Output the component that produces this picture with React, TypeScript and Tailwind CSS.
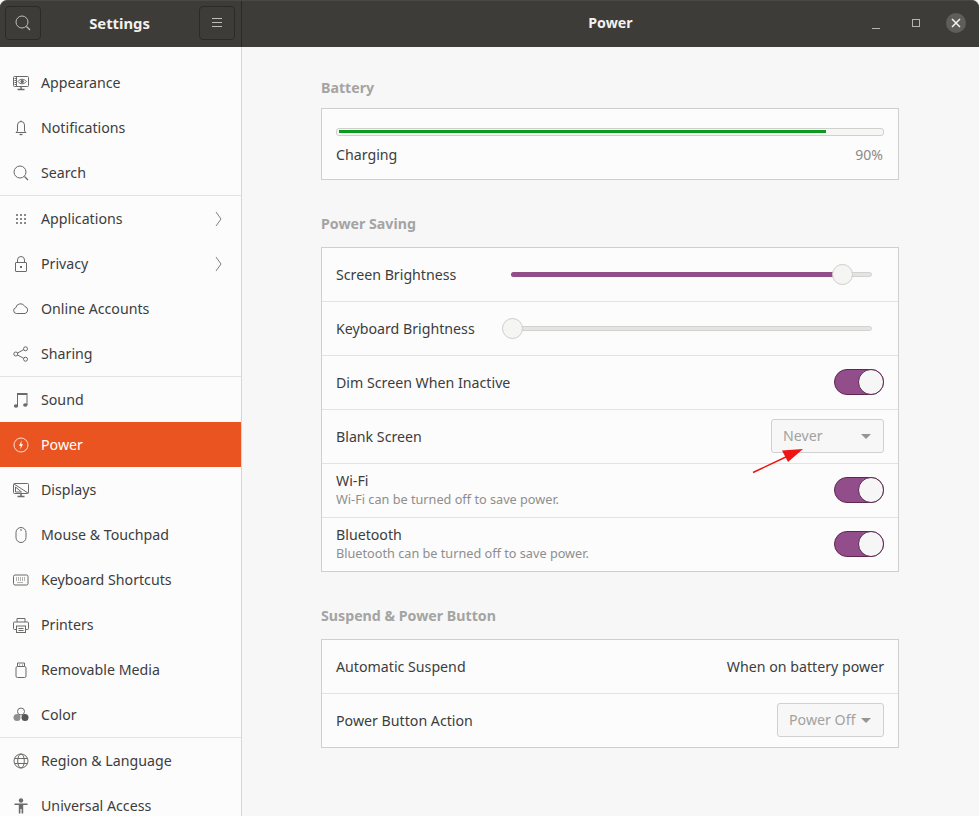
const ink = "#3d3d3d";

function Ico({ children }: { children: React.ReactNode }) {
  return (
    <svg width="16" height="16" viewBox="0 0 16 16" fill="none" stroke="currentColor" strokeWidth="1" className="shrink-0">
      {children}
    </svg>
  );
}

const icons: Record<string, React.ReactNode> = {
  appearance: (
    <Ico>
      <rect x="0.500" y="1.500" width="15" height="10" rx="1" />
      <path d="M3.500 3.500h-2M3.500 5.500h-2M3.500 7.500h-2M3.500 9.500h-2M3.500 1.500v10" />
      <path d="M5 6.500c2-3 6-3 8.500 0-2.500 3-6.500 3-8.500 0z" />
      <circle cx="9.200" cy="6.500" r="1.300" fill="currentColor" />
      <path d="M8 12v2M4.500 14.500h7" strokeWidth="1.500" />
    </Ico>
  ),
  bell: (
    <Ico>
      <path d="M4.500 11V5a3.500 3.500 0 0 1 7 0v6l1.500 1.500H3z" />
      <path d="M6.500 14.500h3" strokeWidth="1.300" />
      <path d="M8 .5v1" />
    </Ico>
  ),
  search: (
    <Ico>
      <circle cx="7" cy="7" r="6" />
      <path d="M11.500 11.500l3.500 3.500" strokeWidth="1.300" />
    </Ico>
  ),
  apps: (
    <svg width="16" height="16" viewBox="0 0 16 16" fill="currentColor" className="shrink-0">
      {[3, 7, 11].flatMap((y) =>
        [3, 7, 11].map((x) => <rect key={`${x}-${y}`} x={x} y={y} width="2" height="2" opacity="0.800" />),
      )}
    </svg>
  ),
  lock: (
    <Ico>
      <rect x="2.500" y="6.500" width="11" height="9" rx="0.500" />
      <path d="M4.500 6.500V4a3.500 3.500 0 0 1 7 0v2.500" />
      <rect x="7" y="10" width="2" height="2" fill="currentColor" stroke="none" />
    </Ico>
  ),
  cloud: (
    <Ico>
      <path d="M3.500 12.500a3 3 0 0 1-.6-5.900A4.700 4.700 0 0 1 11.800 5.500 3.600 3.600 0 0 1 12 12.500z" />
    </Ico>
  ),
  share: (
    <Ico>
      <circle cx="2.800" cy="8" r="2" />
      <circle cx="12.500" cy="2.800" r="2" />
      <circle cx="12.500" cy="13.200" r="2" />
      <path d="M4.500 7l6.200-3.300M4.500 9l6.200 3.300" />
    </Ico>
  ),
  music: (
    <svg width="16" height="16" viewBox="0 0 16 16" fill="currentColor" className="shrink-0">
      <path d="M4 1h10.500v12h-1V3H5v11H4z" />
      <ellipse cx="3" cy="14" rx="2.200" ry="1.800" />
      <ellipse cx="12.300" cy="13" rx="2.200" ry="1.800" />
    </svg>
  ),
  power: (
    <svg width="16" height="16" viewBox="0 0 16 16" fill="none" className="shrink-0">
      <circle cx="8" cy="8" r="7" stroke="currentColor" strokeWidth="1" opacity="0.800" />
      <path d="M8.800 3.500L6 8.800h1.800L7.200 12.500 10 7.200H8.200z" fill="currentColor" />
    </svg>
  ),
  display: (
    <Ico>
      <rect x="0.500" y="1.500" width="15" height="10" rx="1" />
      <path d="M1 2l14 9M2.500 5v5h6z" />
      <path d="M8 12v2M4.500 14.500h7" strokeWidth="1.500" />
    </Ico>
  ),
  mouse: (
    <Ico>
      <rect x="3" y="0.500" width="10" height="15" rx="5" />
      <path d="M8 2v2" />
    </Ico>
  ),
  keyboard: (
    <Ico>
      <rect x="0.500" y="3" width="14.500" height="10" rx="1.500" />
      <path d="M3 6h9M3 8h9M4.500 10.500h6" strokeDasharray="1 1" strokeWidth="1.200" />
    </Ico>
  ),
  printer: (
    <Ico>
      <path d="M4 5V1.500h8V5" />
      <path d="M3.500 12.500h-2a1 1 0 0 1-1-1V6a1 1 0 0 1 1-1h13a1 1 0 0 1 1 1v5.500a1 1 0 0 1-1 1h-2" />
      <rect x="3.500" y="9" width="9" height="6.500" />
      <path d="M5.500 11.500h5M5.500 13.500h5" />
    </Ico>
  ),
  usb: (
    <Ico>
      <rect x="3" y="4.500" width="10" height="11" rx="1.500" />
      <path d="M4.500 4.500V1h7v3.500" />
      <path d="M6.500 2.500v1M9.500 2.500v1" />
    </Ico>
  ),
  color: (
    <svg width="16" height="16" viewBox="0 0 16 16" fill="none" className="shrink-0">
      <circle cx="8" cy="4.500" r="3.500" stroke="currentColor" />
      <circle cx="4" cy="10.500" r="3.500" fill="#8f8f8f" />
      <circle cx="12" cy="10.500" r="3.500" fill="#555555" />
    </svg>
  ),
  globe: (
    <Ico>
      <circle cx="8" cy="8" r="7" />
      <ellipse cx="8" cy="8" rx="3.300" ry="7" />
      <path d="M1.500 5.500h13M1.500 10.500h13" />
    </Ico>
  ),
  access: (
    <svg width="16" height="16" viewBox="0 0 16 16" fill="currentColor" className="shrink-0">
      <circle cx="8" cy="2.500" r="2.200" />
      <path d="M1.500 5.500h13v1.500H10.200v8.500H8.600V11H7.400v4.500H5.800V7H1.500z" />
    </svg>
  ),
};

const navGroups = [
  [
    { icon: "appearance", label: "Appearance" },
    { icon: "bell", label: "Notifications" },
    { icon: "search", label: "Search" },
  ],
  [
    { icon: "apps", label: "Applications", more: true },
    { icon: "lock", label: "Privacy", more: true },
    { icon: "cloud", label: "Online Accounts" },
    { icon: "share", label: "Sharing" },
  ],
  [
    { icon: "music", label: "Sound" },
    { icon: "power", label: "Power", active: true },
    { icon: "display", label: "Displays" },
    { icon: "mouse", label: "Mouse & Touchpad" },
    { icon: "keyboard", label: "Keyboard Shortcuts" },
    { icon: "printer", label: "Printers" },
    { icon: "usb", label: "Removable Media" },
    { icon: "color", label: "Color" },
  ],
  [
    { icon: "globe", label: "Region & Language" },
    { icon: "access", label: "Universal Access" },
  ],
];

function Switch() {
  return (
    <div className="w-[50px] h-[26px] -mt-[1px] rounded-full bg-[#924d8b] border border-[#5e2750] flex justify-end box-border">
      <div className="w-[26px] h-[26px] -my-px -mr-px rounded-full bg-[#f6f6f6] border border-[#5e2750]" />
    </div>
  );
}

function Dropdown({ label, w }: { label: string; w: string }) {
  return (
    <div className={`${w} h-[34px] -mt-[1px] pl-[11px] pr-[12px] flex items-center justify-between rounded-[3px] border border-[#d0d0ce] bg-[#f7f7f7] text-[#a2a2a0]`}>
      <span>{label}</span>
      <svg width="10" height="5" viewBox="0 0 10 5" fill="#959593">
        <path d="M0 0h10L5 5z" />
      </svg>
    </div>
  );
}

function Slider({ value }: { value: number }) {
  return (
    <div className="relative h-[5px] flex-1 rounded-full bg-[#e4e4e2] border border-[#d2d2d0]">
      <div className="h-[5px] -mt-[1px] -ml-px rounded-full bg-[#924d8b]" style={{ width: `${value}%` }} />
      <div
        className="absolute top-[-9px] -ml-[10px] w-[21px] h-[21px] rounded-full bg-[#f5f5f4] border border-[#cdcdcb]"
        style={{ left: `${value}%` }}
      />
    </div>
  );
}

function Row({ title, sub, children }: { title: string; sub?: string; children: React.ReactNode }) {
  return (
    <div className="h-[54px] flex items-center justify-between px-[14px] border-b border-[#e3e3e1] last:border-b-0 last:h-[53px]">
      <div className={`flex flex-col ${sub ? "-mt-[2px]" : ""}`}>
        <span className="leading-[19px]">{title}</span>
        {sub && <span className="text-[12.700px] leading-[19px] text-[#8e8e8c]">{sub}</span>}
      </div>
      {children}
    </div>
  );
}

function Heading({ children }: { children: React.ReactNode }) {
  return <h2 className="font-bold text-[#a4a4a2] leading-[20px]">{children}</h2>;
}

export default function App() {
  return (
    <div
      className="w-[979px] h-[816px] overflow-hidden flex flex-col bg-[#f7f7f7] text-[14.200px]"
      style={{ fontFamily: '"Noto Sans", sans-serif', color: ink }}
    >
      {/* title bar */}
      <div className="h-[47px] shrink-0 flex bg-[#3e3c38] rounded-t-[7px] border-t border-[#4a4844] text-[#f2f1ef]">
        <div className="w-[242px] shrink-0 flex items-center justify-between pl-[5px] pr-[6px] pb-[2px] border-r border-[#2c2a27]">
          <div className="w-[36px] h-[34px] flex items-center justify-center rounded-[4px] border border-[#2c2a27] text-[#bdbcb9]">
            {icons.search}
          </div>
          <span className="font-bold text-[14.800px] -ml-[1px]">Settings</span>
          <div className="w-[36px] h-[34px] flex items-center justify-center rounded-[4px] border border-[#2c2a27] text-[#bdbcb9]">
            <svg width="12" height="10" viewBox="0 0 12 10" stroke="currentColor">
              <path d="M1 .5h10M1 4.500h10M1 8.500h10" />
            </svg>
          </div>
        </div>
        <div className="flex-1 relative flex items-center justify-center pb-[2px] font-bold">
          <span>Power</span>
          <div className="absolute right-[13px] top-[6px] h-[32px] flex items-center gap-[20px]">
            <div className="w-[20px] h-[20px] flex items-end justify-center pb-[4px]">
              <div className="w-[8px] h-px bg-[#b5b4b1]" />
            </div>
            <div className="w-[20px] h-[20px] flex items-center justify-center">
              <div className="w-[8px] h-[8px] border border-[#b5b4b1]" />
            </div>
            <div className="w-[20px] h-[20px] rounded-full bg-[#5f5e5b] flex items-center justify-center">
              <svg width="10" height="10" viewBox="0 0 10 10" stroke="#f4f4f4" strokeWidth="1.500">
                <path d="M1 1l8 8M9 1l-8 8" />
              </svg>
            </div>
          </div>
        </div>
      </div>

      <div className="flex-1 flex min-h-0 relative">
        {/* sidebar */}
        <nav className="w-[242px] shrink-0 bg-[#fcfcfc] border-r border-[#d6d6d4] pt-[13px]">
          {navGroups.map((group, i) => (
            <div key={i} className={i < navGroups.length - 1 ? "border-b border-[#e3e3e1]" : ""}>
              {group.map((item) => (
                <div
                  key={item.label}
                  className={`h-[45px] flex items-center pl-[13px] pr-[17px] ${
                    item.active ? "bg-[#e95420] text-white" : ""
                  }`}
                >
                  <span className={item.active ? "text-white" : "text-[#6a6a68]"}>{icons[item.icon]}</span>
                  <span className="ml-[12px] flex-1">{item.label}</span>
                  {item.more && (
                    <svg width="7" height="16" viewBox="0 0 7 16" fill="none" stroke="#7f7f7d" className="-translate-x-[2px]">
                      <path d="M1 1l5 7-5 7" />
                    </svg>
                  )}
                </div>
              ))}
            </div>
          ))}
        </nav>

        {/* main */}
        <main className="flex-1 pl-[79px] pr-[80px] pt-[31px]">
          <Heading>Battery</Heading>
          <div className="mt-[10px] h-[72px] border border-[#cfcfcd] bg-[#fcfcfc] px-[14px] pt-[19px]">
            <div className="h-[8px] rounded-[3px] bg-[#f6f6f5] border border-[#cfcfcd] pt-[1px] px-[2px]">
              <div className="h-[3px] w-[89.800%] bg-[#0e9a1e]" />
            </div>
            <div className="mt-[9px] flex items-center justify-between leading-[20px]">
              <span>Charging</span>
              <span className="text-[14px] mr-[1px] text-[#8a8a88]">90%</span>
            </div>
          </div>

          <div className="mt-[34px]">
            <Heading>Power Saving</Heading>
          </div>
          <div className="mt-[13px] border border-[#cfcfcd] bg-[#fcfcfc]">
            <Row title="Screen Brightness">
              <div className="w-[361px] mr-[12px] -mt-[1px] flex">
                <Slider value={91.800} />
              </div>
            </Row>
            <Row title="Keyboard Brightness">
              <div className="w-[361px] mr-[12px] -mt-[1px] flex">
                <Slider value={0} />
              </div>
            </Row>
            <Row title="Dim Screen When Inactive">
              <Switch />
            </Row>
            <Row title="Blank Screen">
              <Dropdown label="Never" w="w-[113px]" />
            </Row>
            <Row title="Wi-Fi" sub="Wi-Fi can be turned off to save power.">
              <Switch />
            </Row>
            <Row title="Bluetooth" sub="Bluetooth can be turned off to save power.">
              <Switch />
            </Row>
          </div>

          <div className="mt-[34px]">
            <Heading>Suspend &amp; Power Button</Heading>
          </div>
          <div className="mt-[13px] border border-[#cfcfcd] bg-[#fcfcfc]">
            <Row title="Automatic Suspend">
              <span>When on battery power</span>
            </Row>
            <Row title="Power Button Action">
              <Dropdown label="Power Off" w="w-[107px]" />
            </Row>
          </div>
        </main>

        {/* red arrow annotation */}
        <svg className="absolute left-[750px] top-[398px]" width="56" height="30" viewBox="0 0 56 30">
          <path d="M3 27.500L38 11" stroke="#f01414" strokeWidth="1.500" />
          <path d="M53 4L32 5.500 38 17z" fill="#f01414" />
        </svg>
      </div>
    </div>
  );
}
